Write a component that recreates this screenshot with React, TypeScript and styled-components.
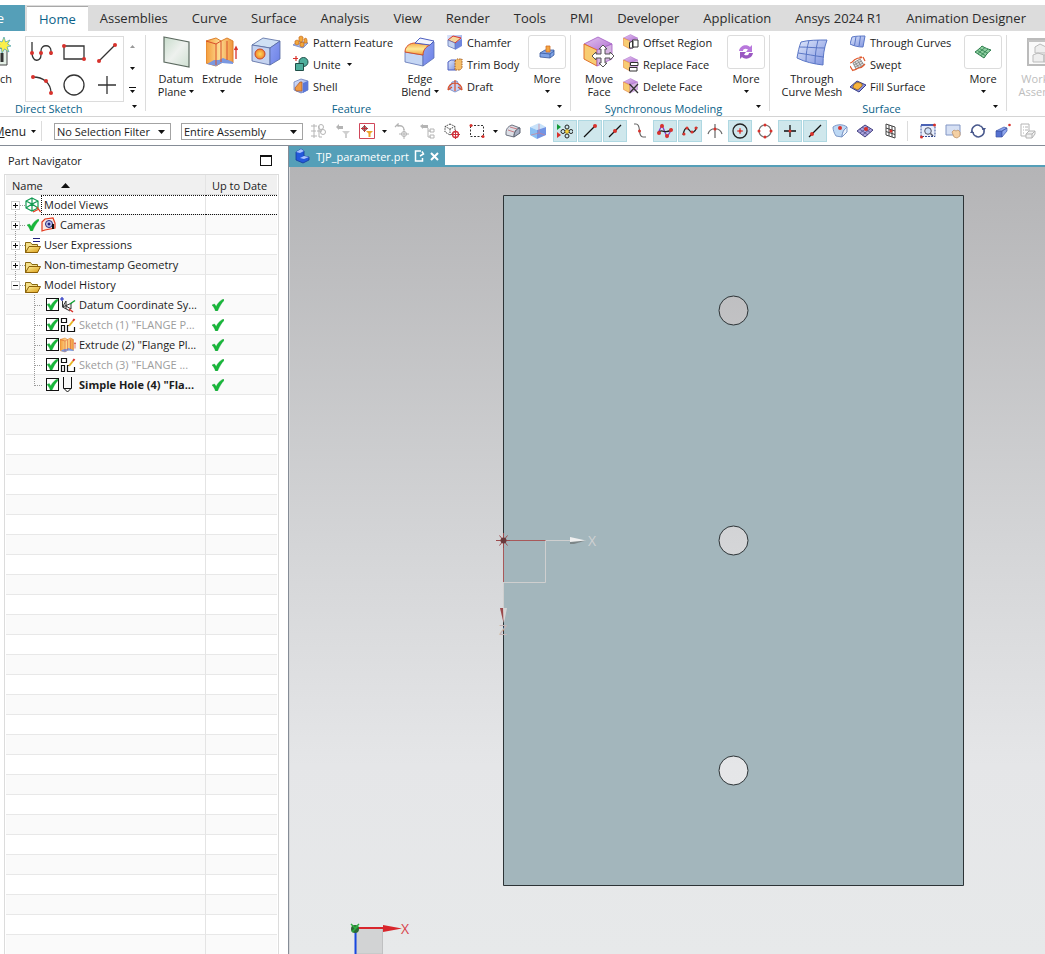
import React from "react";
import styled, { createGlobalStyle, css } from "styled-components";

const teal = "#559fb8";
const line = "#dcdcdc";

const GlobalStyle = createGlobalStyle`
  * { box-sizing: border-box; }
  html, body, #root { height: 100%; }
  body {
    margin: 0;
    background: #fff;
    color: #1c1c1c;
    font-family: "Open Sans", "Noto Sans", sans-serif;
    font-size: 12px;
    overflow: hidden;
  }
  button, select, input {
    font: inherit;
    color: inherit;
    margin: 0;
    padding: 0;
    border: 0;
    background: none;
  }
  svg { display: block; flex: none; }
`;

const Window = styled.div`
  display: flex;
  flex-direction: column;
  height: 100vh;
  overflow: hidden;
`;

/* ---------- tab strip ---------- */

const TabStrip = styled.nav`
  display: flex;
  flex: none;
  height: 26px;
  margin-top: 5px;
  background: #dcdcdc;
  font-size: 13px;
  line-height: 26px;
  white-space: nowrap;
`;

const FileTab = styled.button`
  display: flex;
  justify-content: flex-end;
  flex: none;
  width: 25px;
  margin-right: 2px;
  padding-right: 21px;
  background: ${teal};
  color: #fff;
`;

const Tab = styled.button<{ $active?: boolean }>`
  flex: none;
  padding: 0 12px;
  color: #2b2b2b;
  ${(p) =>
    p.$active &&
    css`
      background: #fff;
      color: #0b6289;
      border-top: 1px solid #a8a8a8;
      margin-top: 1px;
      line-height: 24px;
    `}
`;

/* ---------- ribbon ---------- */

const Ribbon = styled.div`
  display: flex;
  flex: none;
  height: 86px;
  padding-top: 1px;
  border-bottom: 1px solid #d4d4d4;
  font-size: 11px;
  overflow: hidden;
`;

const Group = styled.section<{ $w?: number }>`
  position: relative;
  display: flex;
  flex-direction: column;
  flex: none;
  width: ${(p) => (p.$w ? `${p.$w}px` : "auto")};
  padding: 0 1px 0 4px;
  &::after {
    content: "";
    position: absolute;
    right: -1px;
    top: 3px;
    height: 76px;
    width: 1px;
    background: ${line};
  }
  & + & { margin-left: 1px; }
`;

const GroupBody = styled.div`
  display: flex;
  height: 70px;
`;

const GroupTitle = styled.h2<{ $start?: boolean }>`
  margin: 0;
  padding: ${(p) => (p.$start ? "0 16px 0 11px" : "0 16px 0 0")};
  font-size: 11px;
  font-weight: 400;
  line-height: 14px;
  color: #0b6289;
  text-align: ${(p) => (p.$start ? "left" : "center")};
  white-space: nowrap;
`;

const Launcher = styled.button`
  position: absolute;
  right: 6px;
  bottom: 6px;
  width: 9px;
  height: 8px;
  display: flex;
  align-items: center;
  justify-content: center;
`;

const BigButton = styled.button<{ $w: number }>`
  display: flex;
  flex-direction: column;
  align-items: center;
  flex: none;
  width: ${(p) => p.$w}px;
  padding-top: 4px;
  line-height: 13px;
  white-space: nowrap;
  &:disabled { color: #bdbdbd; }
`;

const BigIcon = styled.span`
  height: 32px;
  margin-bottom: 4px;
`;

const MoreFrame = styled.span`
  display: flex;
  align-items: center;
  justify-content: center;
  width: 38px;
  height: 34px;
  margin: -1px 0 3px;
  border: 1px solid ${line};
  border-radius: 3px;
`;

const Line = styled.span`
  display: flex;
  align-items: center;
  justify-content: center;
  gap: 3px;
  height: 13px;
`;

const Commands = styled.div<{ $w: number; $indent?: boolean }>`
  display: flex;
  flex-direction: column;
  flex: none;
  width: ${(p) => p.$w}px;
  margin-top: -1px;
  padding-left: ${(p) => (p.$indent ? 3 : 0)}px;
`;

const Command = styled.button<{ $menu?: boolean }>`
  display: flex;
  align-items: center;
  gap: ${(p) => (p.$menu ? 6 : 4)}px;
  height: 22px;
  white-space: nowrap;
  > svg:first-child { margin-right: ${(p) => (p.$menu ? -2 : 0)}px; }
`;

const SketchClip = styled.div`
  display: flex;
  justify-content: flex-end;
  width: 15px;
  margin-left: -4px;
  flex: none;
  overflow: hidden;
`;

const Gallery = styled.div`
  display: grid;
  grid-template-columns: repeat(3, 1fr);
  grid-template-rows: repeat(2, 1fr);
  width: 99px;
  height: 66px;
  margin: 4px 0 0 10px;
  flex: none;
  border: 1px solid ${line};
`;

const GalleryCell = styled.button`
  display: flex;
  align-items: center;
  justify-content: center;
`;

const GalleryScroll = styled.div`
  display: flex;
  flex-direction: column;
  width: 17px;
  margin-top: 3px;
`;

const ScrollButton = styled.button`
  display: flex;
  align-items: center;
  justify-content: center;
  height: 22px;
`;

/* ---------- selection bar ---------- */

const SelectionBar = styled.div`
  display: flex;
  align-items: center;
  flex: none;
  height: 29px;
  border-bottom: 1px solid #858c96;
  overflow: hidden;
`;

const MenuButton = styled.button`
  display: flex;
  align-items: center;
  justify-content: flex-end;
  gap: 5px;
  width: 36px;
  flex: none;
  white-space: nowrap;
`;

const Divider = styled.span<{ $l: number; $r: number }>`
  flex: none;
  width: 1px;
  height: 20px;
  margin: 0 ${(p) => p.$r}px 0 ${(p) => p.$l}px;
  background: ${line};
`;

const Selects = styled.div`
  display: flex;
  gap: 10px;
  flex: none;
`;

const SelectBox = styled.label<{ $w: number }>`
  position: relative;
  flex: none;
  width: ${(p) => p.$w}px;
  height: 17px;
  border: 1px solid #a3a3a3;
  select {
    display: block;
    appearance: none;
    width: 100%;
    height: 15px;
    padding-left: 2px;
    font-size: 11px;
    line-height: 15px;
  }
  svg {
    position: absolute;
    right: 5px;
    top: 6px;
    pointer-events: none;
  }
`;

const Tools = styled.div`
  display: flex;
  align-items: center;
  gap: 1px;
  margin-left: 3px;
  flex: none;
`;

const Tool = styled.button<{ $on?: boolean; $w?: number }>`
  display: flex;
  align-items: center;
  justify-content: center;
  flex: none;
  width: ${(p) => p.$w ?? 24}px;
  height: 22px;
  ${(p) => p.$on && css`
    background: #cfe7ec;
    border: 1px solid #afd8e2;
  `}
`;

/* ---------- work area ---------- */

const Work = styled.main`
  display: flex;
  flex: 1;
  min-height: 0;
`;

const Navigator = styled.aside`
  display: flex;
  flex-direction: column;
  flex: none;
  width: 289px;
  padding-left: 4px;
  border-right: 1px solid #858c96;
  font-size: 11px;
  overflow: hidden;
`;

const NavigatorHead = styled.header`
  display: flex;
  align-items: center;
  justify-content: space-between;
  height: 28px;
  flex: none;
  padding: 1px 16px 0 4px;
  h1 { margin: 0; font-size: 11px; font-weight: 400; }
`;

const MaximizeButton = styled.button`
  width: 12px;
  height: 11px;
  border: 1px solid #111;
  border-top-width: 2px;
`;

const TreeFrame = styled.div`
  flex: 1;
  min-height: 0;
  width: 275px;
  overflow: hidden;
  border: 1px solid #dcdcdc;
  border-bottom: 0;
  padding: 0 1px;
`;

const Tree = styled.table`
  width: 100%;
  table-layout: fixed;
  border-collapse: separate;
  border-spacing: 0;
  th, td {
    height: 20px;
    padding: 0;
    border-bottom: 1px solid #e8e8e8;
    text-align: left;
    font-weight: 400;
    white-space: nowrap;
  }
  th {
    padding: 2px 0 0 6px;
    background: #f0f0f0;
    border-bottom-color: #dcdcdc;
  }
  th:first-child, td:first-child { width: 200px; border-right: 1px solid #e4e4e4; }
  tbody tr:nth-child(even) { background: #fafafa; }
`;

const HeadCell = styled.span`
  display: flex;
  align-items: center;
  gap: 18px;
`;

const Node = styled.div<{ $child?: boolean; $dim?: boolean; $bold?: boolean }>`
  display: flex;
  align-items: center;
  height: 19px;
  padding-left: ${(p) => (p.$child ? 28 : 5)}px;
  color: ${(p) => (p.$dim ? "#9d9d9d" : "inherit")};
  font-weight: ${(p) => (p.$bold ? 700 : 400)};
`;

const IconSlot = styled.span`
  display: flex;
  justify-content: center;
  width: 16px;
`;

const NodeLabel = styled.span<{ $focus?: boolean }>`
  flex: 1;
  min-width: 0;
  line-height: 19px;
  padding-left: 3px;
  ${(p) => p.$focus && css`
    height: 20px;
    margin: 0 -1px -1px 0;
    padding-left: 2px;
    line-height: 18px;
    border: 1px dotted #111;
    border-right: 0;
  `}
`;

const FocusCell = styled.div`
  height: 20px;
  margin-bottom: -1px;
  border: dotted #111;
  border-width: 1px 0;
`;

const NodeCheck = styled.input`
  display: block;
  appearance: none;
  flex: none;
  width: 13px;
  height: 13px;
  border: 1px solid #111;
  background: #fff;
`;

const CheckWrap = styled.label`
  position: relative;
  display: block;
  margin-right: 1px;
  height: 13px;
  svg { position: absolute; left: 1px; top: 1px; }
`;

const StatusCell = styled.div`
  padding-left: 6px;
`;

/* ---------- graphics window ---------- */

const Graphics = styled.section`
  display: flex;
  flex-direction: column;
  flex: 1;
  min-width: 0;
`;

const DocTabs = styled.div`
  display: flex;
  flex: none;
  height: 21px;
  border-bottom: 2px solid ${teal};
`;

const DocTab = styled.div`
  display: flex;
  align-items: center;
  gap: 5px;
  padding: 0 6px;
  height: 20px;
  background: ${teal};
  color: #fff;
  font-size: 11px;
`;

const CloseButton = styled.button`
  display: flex;
`;

const Canvas = styled.div`
  position: relative;
  flex: 1;
  min-height: 0;
  overflow: hidden;
  border-left: 1px solid #d6d8da;
  background: linear-gradient(#b4b4b6 0%, #d4d5d7 48%, #e5e6e8 76%, #e7e9ea 100%);
`;

const Scene = styled.svg`
  width: 100%;
  height: 100%;
`;

const Triad = styled.svg`
  position: absolute;
  left: 56px;
  bottom: 0;
`;

/* ---------- glyphs ---------- */

const Caret = ({ size = 5 }: { size?: number }) => (
  <svg width={size} height={Math.ceil(size / 2)} viewBox="0 0 10 6" preserveAspectRatio="none">
    <path d="M0 0H10L5 6Z" fill="#111" />
  </svg>
);

const Dot = ({ x, y, r = 2 }: { x: number; y: number; r?: number }) => (
  <circle cx={x} cy={y} r={r} fill="#d8322c" />
);

const Svg = ({ s = 16, v = s, children }: { s?: number; v?: number; children: React.ReactNode }) => (
  <svg width={s} height={s} viewBox={`0 0 ${v} ${v}`} fill="none">
    {children}
  </svg>
);

const HiddenSvg = styled.svg`
  position: absolute;
`;

const Gradients = () => (
  <HiddenSvg width="0" height="0">
    <defs>
      <linearGradient id="blue" x1="0" y1="0" x2="1" y2="1">
        <stop offset="0" stopColor="#dfe8fb" />
        <stop offset="1" stopColor="#7f93e0" />
      </linearGradient>
      <linearGradient id="side" x1="0" y1="0" x2="1" y2="1">
        <stop offset="0" stopColor="#8fa2f2" />
        <stop offset="1" stopColor="#6c80e6" />
      </linearGradient>
      <linearGradient id="orange" x1="0" y1="0" x2="1" y2="0">
        <stop offset="0" stopColor="#f49b3a" />
        <stop offset=".5" stopColor="#fcdc92" />
        <stop offset="1" stopColor="#f0953a" />
      </linearGradient>
      <linearGradient id="plane" x1="0" y1="0" x2="1" y2="1">
        <stop offset="0" stopColor="#c7dccb" />
        <stop offset=".5" stopColor="#eef1ee" />
        <stop offset="1" stopColor="#cfe0d2" />
      </linearGradient>
      <linearGradient id="yellow" x1="0" y1="0" x2="1" y2="1">
        <stop offset="0" stopColor="#fff3a0" />
        <stop offset="1" stopColor="#d99a12" />
      </linearGradient>
      <linearGradient id="blend" x1="0" y1="0" x2="0" y2="1">
        <stop offset="0" stopColor="#f6a94a" />
        <stop offset=".5" stopColor="#fdeb9a" />
        <stop offset="1" stopColor="#f0a03e" />
      </linearGradient>
      <radialGradient id="hole">
        <stop offset="0" stopColor="#ffd95a" />
        <stop offset="1" stopColor="#f0862c" />
      </radialGradient>
      <linearGradient id="violet" x1="0" y1="0" x2="1" y2="1">
        <stop offset="0" stopColor="#e3c4f0" />
        <stop offset="1" stopColor="#b273d2" />
      </linearGradient>
    </defs>
  </HiddenSvg>
);

const SketchIcon = () => (
  <Svg s={32}>
    <path d="M4 12H28V29H4Z" fill="#e4efe6" stroke="#444" />
    <path d="M23 17V26" stroke="#333" strokeWidth="3" />
    <path d="M25 1L26.5 6L31 4L28.5 8L32 10L28 11L30 16L25.5 13L23 17L22.5 12L17 12L21 9L18 4L23 6Z" fill="#fbf04a" stroke="#3f9fb4" strokeWidth=".7" />
  </Svg>
);

const DatumPlaneIcon = () => (
  <Svg s={32}>
    <path d="M4 1L29 6V31L4 26Z" fill="url(#plane)" stroke="#5c6a60" strokeWidth="1.2" />
  </Svg>
);

const ExtrudeIcon = ({ s = 32 }: { s?: number }) => (
  <Svg s={s} v={32}>
    <path d="M0 5L10 2L15 5L21 2L27 5V27L21 24L15 27L10 30L0 27Z" fill="url(#orange)" stroke="#dd7f2a" />
    <path d="M1 28L8 24H13L17 22L27 26V28L16 27L10 30Z" fill="#7a98e0" />
    <path d="M10 8V29M15 5V26M21 5V24M10 8L15 5M0 5L10 8" stroke="#d8502c" />
    <path d="M30 23V12M28.5 14L30 11L31.5 14" stroke="#d8322c" strokeWidth="1.3" />
  </Svg>
);

const HoleIcon = () => (
  <Svg s={32}>
    <g stroke="#54689f" strokeWidth=".8">
      <path d="M2 9L13 2L30 5L20 12Z" fill="#cfe0f4" />
      <path d="M2 9L20 12V29L2 25Z" fill="#c5d3f0" />
      <path d="M20 12L30 5V23L20 29Z" fill="url(#side)" />
    </g>
    <circle cx="10" cy="18" r="5" fill="url(#hole)" stroke="#c9442a" />
  </Svg>
);

const EdgeBlendIcon = () => (
  <Svg s={32}>
    <path d="M1 16L19 19V30L1 26Z" fill="#c5d6f4" stroke="#5a70b4" strokeWidth=".8" />
    <path d="M19 19C19 13 23 10 30 6V22L19 30Z" fill="url(#side)" stroke="#5a70b4" strokeWidth=".8" />
    <path d="M1 16C1 10 6 7 11 7L26 9C21 11 19 15 19 19Z" fill="url(#blend)" stroke="#d8502c" />
    <path d="M11 7L16 2L30 5L26 9Z" fill="#f1f4ff" stroke="#4c5ec0" />
  </Svg>
);

const PatternIcon = () => (
  <Svg>
    <path d="M0 11L6 7L15 9L10 14Z" fill="#a9bff0" stroke="#5c76bb" strokeWidth=".7" />
    <path d="M2 10V7L4 6L6 7V10L4 11ZM6 6V3L8 2L10 3V6L8 9ZM7 12V9L9 8L11 9V12L9 13ZM11 9V5L13 4L14 6V9Z" fill="#f2a83c" stroke="#c66a1e" strokeWidth=".7" />
  </Svg>
);

const UniteIcon = () => (
  <Svg>
    <path d="M3 0V5M0 2.5H5" stroke="#d8322c" strokeWidth="1.2" />
    <circle cx="10.500" cy="6" r="4.500" fill="#4fae9c" stroke="#1f4f48" />
    <path d="M2.500 7.500H10.500V14.500H2.500Z" fill="#4fae9c" stroke="#1f4f48" />
  </Svg>
);

const ShellIcon = () => (
  <Svg>
    <path d="M1 4L8 1L15 3V12L8 15L1 12Z" fill="url(#blue)" stroke="#5a70b4" strokeWidth=".7" />
    <path d="M10 5L15 3V12L10 15Z" fill="#5c78d8" />
    <path d="M2 10L7 4H9V13L3 13Z" fill="#ef9a44" stroke="#a8542a" strokeWidth=".7" />
  </Svg>
);

const ChamferIcon = () => (
  <Svg>
    <path d="M0 1H15V11L8 15L1 12Z" fill="url(#blue)" />
    <path d="M8 9L15 5V12L8 16Z" fill="#6f86de" />
    <path d="M1 6L6 2L14 4L8 9Z" fill="#f6d79b" stroke="#d8322c" />
    <path d="M1 6L8 9V15L1 12Z" fill="#c5d3f0" stroke="#5a70b4" strokeWidth=".7" />
  </Svg>
);

const TrimBodyIcon = () => (
  <Svg>
    <path d="M1 6L4 4H9V14H1Z" fill="url(#blue)" stroke="#4c5ec0" />
    <path d="M8 5L10 3H15V12L13 14H8Z" fill="#f4bd68" stroke="#a05a20" strokeDasharray="1.5 1" />
  </Svg>
);

const DraftIcon = () => (
  <Svg>
    <path d="M5 4L10 3L14 11L8 14L2 11Z" fill="#c7d3f6" stroke="#5a70b4" strokeWidth=".7" />
    <path d="M8 2V13M8 5C4 5 1 8 1 12M8 5C12 5 15 8 15 12M1 12L5 9M15 12L11 9" stroke="#d8502c" strokeWidth="1.2" />
  </Svg>
);

const FeatureMoreIcon = () => (
  <Svg>
    <path d="M1 9L6 6H15V11L11 14L1 13Z" fill="#7fa3e6" stroke="#37589c" strokeWidth=".8" />
    <path d="M1 9L11 10L15 7M11 10V14" stroke="#37589c" strokeWidth=".8" />
    <path d="M7 8V2H11V8Z" fill="#f4a640" stroke="#d2702a" strokeWidth=".8" />
  </Svg>
);

const FaceCube = ({ children }: { children?: React.ReactNode }) => (
  <>
    <path d="M1 8L15 1L29 8L14 14Z" fill="url(#violet)" stroke="#a25cc4" strokeWidth=".8" />
    <path d="M1 8L14 14V30L1 23Z" fill="#f8cc72" stroke="#e0702c" />
    <path d="M14 14L29 8V23L14 30Z" fill="#d6b4e2" stroke="#a25cc4" strokeWidth=".8" />
    {children}
  </>
);

const MoveFaceIcon = () => (
  <Svg s={32}>
    <FaceCube>
      <path d="M20 9L24 13H22V18H27V16L31 20L27 24V22H22V27H24L20 31L16 27H18V22H13V24L9 20L13 16V18H18V13H16Z" fill="#fff" stroke="#555" />
    </FaceCube>
  </Svg>
);

const OffsetRegionIcon = () => (
  <Svg s={16} v={32}>
    <FaceCube>
      <path d="M13 17L20 14V28H13ZM19 12H30V26H19Z" fill="#fff" stroke="#333" strokeWidth="2" />
    </FaceCube>
  </Svg>
);

const ReplaceFaceIcon = () => (
  <Svg s={16} v={32}>
    <FaceCube>
      <path d="M15 13H30V19H15ZM13 23H28V30H13Z" fill="#fff" stroke="#333" strokeWidth="2" />
    </FaceCube>
  </Svg>
);

const DeleteFaceIcon = () => (
  <Svg s={16} v={32}>
    <FaceCube>
      <path d="M13 12L30 30M30 12L13 30" stroke="#333" strokeWidth="2.5" />
    </FaceCube>
  </Svg>
);

const SyncMoreIcon = () => (
  <Svg>
    <path d="M1 7C2 1 9 0 12 3L14 1V8H8L10 5.5C8 4 5 4.500 5 7Z" fill="#b877dc" />
    <path d="M15 9C14 15 7 16 4 13L2 15V8H8L6 10.5C8 12 11 11.500 11 9Z" fill="#9a58c2" />
  </Svg>
);

const CurveMeshIcon = () => (
  <Svg s={32}>
    <path d="M5 6C12 4 22 4 31 4C28 12 27 20 27 29C18 28 9 26 1 22C2 16 3 11 5 6Z" fill="url(#blue)" stroke="#5b77c6" />
    <path d="M13 4.500C11 11 10 18 10 25.500M22 4C20 12 19 20 19 28M3.500 11C12 11 20 12 29 12M2 17C10 18 19 20 27.500 21" stroke="#5b77c6" />
  </Svg>
);

const ThroughCurvesIcon = () => (
  <Svg>
    <path d="M2 3C6 2 11 2 15 2L13 13C8 13 4 12 0 10Z" fill="url(#blue)" stroke="#5b77c6" />
    <path d="M6 2.5L4.5 11.5M10.5 2L9 12.5" stroke="#5b77c6" />
  </Svg>
);

const SweptIcon = () => (
  <Svg>
    <path d="M3 7L10 3L14 9L6 13Z" fill="#ddd" stroke="#777" strokeWidth=".8" />
    <path d="M5 6L9 12M7.5 4.5L11.5 10.5M4 9L11.5 5M5 11L13 7" stroke="#777" strokeWidth=".7" />
    <path d="M0 7C3 7 3 4 6 3C9 1 10 3 12 1M12 1H9.5M2 14C5 15 7 12 9 12C12 12 13 10 15 8M0 10L3 15M13 1L15 5" stroke="#e0582c" strokeWidth="1.2" />
  </Svg>
);

const FillSurfaceIcon = () => (
  <Svg>
    <path d="M0 9L7 3L16 7L9 14Z" fill="#8d92dc" stroke="#39408c" />
    <path d="M3 10C3 5 8 3 12 6C13 9 10 9 9 11C7 13 5 10 3 10Z" fill="#f7b43c" stroke="#7a5218" strokeWidth=".7" />
  </Svg>
);

const SurfaceMoreIcon = () => (
  <Svg>
    <path d="M0 8C3 6 5 4 7 2C10 4 13 5 16 6C13 8 11 11 9 14C6 12 3 10 0 8Z" fill="#8fcfa0" stroke="#2c7c4c" />
    <path d="M2.5 6.5L11 12M4.5 4.5L13 9.5M3 9.5L10 3.5M6 11.5L13 5" stroke="#2c7c4c" strokeWidth=".8" />
  </Svg>
);

const WorkOnIcon = () => (
  <Svg s={32}>
    <path d="M1 3H31V29H1Z" fill="#fafafa" stroke="#bbb" strokeWidth="2" />
    <path d="M1 5H31" stroke="#c4c4c4" strokeWidth="2" />
    <path d="M6 19L11 17L17 19V26H6ZM17 19L22 17L28 19V26H17ZM8 11L13 8L19 11V17H8Z" fill="#eee" stroke="#bbb" />
  </Svg>
);

const FolderIcon = ({ marked }: { marked?: boolean }) => (
  <Svg>
    <path d="M.5 5.5H5.5L7 7.5H12.5V15.5H.5Z" fill="#f5e08a" stroke="#8a6a10" />
    <path d="M.5 15.5L4 9.5H15.5L12.5 15.5Z" fill="url(#yellow)" stroke="#8a5f08" />
    {marked && <path d="M8 1.5H15M8 4.5H15" stroke="#20207c" />}
  </Svg>
);

const GreenCheck = ({ s = 12 }: { s?: number }) => (
  <Svg s={s} v={12}>
    <path d="M0 6L2.5 5L4.2 7.5C5.5 4.5 8 1.5 11.5 0L12 1.5C9.5 4 7.5 7.5 5.5 12H3.500C3 10 1.500 7.500 0 6Z" fill="#17b83a" stroke="#0c9a2a" strokeWidth=".4" />
  </Svg>
);

const ModelViewsIcon = () => (
  <Svg>
    <path d="M7 1L13 4V11L7 14L1 11V4ZM1 4L7 7L13 4M7 1V14M1 11L7 7L13 11" stroke="#129a52" strokeWidth="1.2" />
    <path d="M8 15L14 12M12 10L15.5 15" stroke="#e63a1e" strokeWidth="1.3" />
  </Svg>
);

const CameraIcon = () => (
  <Svg>
    <path d="M1 5L4 2L12 1L14 6V11L4 13L1 14Z" fill="#fde9e0" stroke="#e2391e" strokeWidth="1.2" />
    <circle cx="8" cy="7" r="3.5" fill="#c4c8f0" stroke="#24267c" />
    <circle cx="8" cy="7" r="1.5" fill="#24267c" />
    <path d="M12 7V12" stroke="#111" strokeWidth="2" />
  </Svg>
);

const CsysIcon = () => (
  <Svg>
    <path d="M2 0V4M0 2H4" stroke="#2430c0" strokeWidth="1.2" />
    <path d="M2.500 4V10L10 14M2.500 10L12 6M6 4V12M6 4L2.500 10M6 9L11 12V7" stroke="#333" />
    <path d="M10 7L15 3.5" stroke="#12a234" strokeWidth="1.5" />
    <path d="M9 12L13 15" stroke="#d8322c" strokeWidth="1.5" />
  </Svg>
);

const SketchNodeIcon = () => (
  <Svg>
    <path d="M1.5 1.5H6.5V5.5H1.5ZM1.5 8.5H4.5V14.5H1.5ZM9 8.5H7.5V14.5H14.500V10" stroke="#111" strokeWidth="1.2" />
    <path d="M9 9L13 4" stroke="#e8b422" strokeWidth="2" />
    <path d="M13 4L14.5 2" stroke="#d8322c" strokeWidth="2" />
  </Svg>
);

const HoleNodeIcon = () => (
  <Svg>
    <path d="M3.5 0V11L7.5 15L11.5 11V0M3.5 11.5H11.5" stroke="#111" />
  </Svg>
);

const Twisty = ({ open, first, last }: { open?: boolean; first?: boolean; last?: boolean }) => (
  <svg width="14" height="20" viewBox="0 0 14 20" fill="none">
    <path d={`M4.5 ${first ? 10 : 0}V${last ? 10 : 20}M9 10.5H14`} stroke="#999" strokeDasharray="1 1" />
    <rect x=".5" y="6.5" width="8" height="8" fill="#fff" stroke="#d0d0d0" />
    <path d={open ? "M2 10.5H7" : "M2 10.5H7M4.5 8V13"} stroke="#111" />
  </svg>
);

const Branch = ({ last }: { last?: boolean }) => (
  <svg width="12" height="20" viewBox="0 0 12 20" fill="none">
    <path d={`M.5 0V${last ? 11 : 20}M1 10.5H9`} stroke="#999" strokeDasharray="1 1" />
  </svg>
);

/* selection-bar icons */
const gray = "#b4b4b4";
const HierarchyIcon = () => (
  <Svg><path d="M1 3H7M1 8H6M1 13H7M4 1V15M7 8H12M9 3V14H12" stroke={gray} /><circle cx="11" cy="4" r="2.5" stroke={gray} /><circle cx="13" cy="9" r="2.5" stroke={gray} /></Svg>
);
const UndoFilterIcon = () => (
  <Svg><path d="M1 4L4 1V3H8V6H4V7Z" fill={gray} /><path d="M7 8H15L12 11V15H10V11Z" fill="#cfcfcf" /></Svg>
);
const FilterIcon = () => (
  <Svg>
    <path d="M.5 .5H15.5V15.5H.5Z" fill="#fff" stroke="#d0475a" />
    <circle cx="5.5" cy="5.5" r="2" stroke="#5a2020" /><path d="M5.5 2V9M2 5.5H9" stroke="#c0303a" />
    <path d="M7 8H14L11.5 10.5V14H9.5V10.5Z" fill="#eda42c" />
  </Svg>
);
const UndoTargetIcon = () => (
  <Svg><path d="M1 4L4 1V3C8 2 10 4 10 7" stroke={gray} strokeWidth="1.3" /><circle cx="10" cy="11" r="2.5" stroke={gray} /><path d="M10 6V16M5 11H15" stroke={gray} /></Svg>
);
const TreeUpIcon = () => (
  <Svg><path d="M1 3L4 1V6ZM4 2H9V5H4Z" fill={gray} /><path d="M9 5V14H12M9 8H12M11 6H15V9H11ZM11 12H15V15H11Z" stroke={gray} /></Svg>
);
const CubeTargetIcon = () => (
  <Svg>
    <path d="M6 1L11 3.5V9L6 12L1 9V3.5ZM1 3.5L6 6L11 3.5M6 6V12" stroke="#444" strokeDasharray="1.5 1" />
    <circle cx="11.5" cy="11.5" r="3" stroke="#d0303a" strokeWidth="1.3" /><path d="M11.5 7V16M7 11.5H16" stroke="#d0303a" />
  </Svg>
);
const MarqueeIcon = () => (
  <Svg><path d="M1.5 2.500H14.500V13.500H1.500Z" stroke="#333" strokeDasharray="2 1.5" /><Dot x={2} y={2.5} r={1.5} /><Dot x={14} y={13.5} r={1.5} /></Svg>
);
const BodyIcon = () => (
  <Svg>
    <path d="M1 10C1 5 4 3 7 2L15 5C11 6 9 9 9 14L1 12Z" fill="#dcdfe6" stroke="#6c7280" />
    <path d="M15 5V10L9 14C9 9 11 6 15 5Z" fill="#a8b0c4" stroke="#5c6270" /><path d="M5 4L12 6M3 7L9 9" stroke="#c0606a" strokeWidth=".8" />
  </Svg>
);
const SolidIcon = () => (
  <Svg>
    <path d="M0 4L9 0L16 4L7 7Z" fill="#c8e2fa" /><path d="M0 4L7 7V16L0 12Z" fill="#8cc0f2" /><path d="M7 7L16 4V12L7 16Z" fill="#7294e4" />
    <path d="M9 1V10M1 12L9 10L15 12" stroke="#d08090" strokeWidth=".7" />
  </Svg>
);
const SnapIcon = () => (
  <Svg>
    <path d="M0 1L4 4L0 7Z" fill="#129a34" /><path d="M0 9L4 12L0 15Z" fill="#d8322c" />
    <circle cx="10" cy="4" r="2" stroke="#222" /><circle cx="10" cy="13" r="2" stroke="#222" /><circle cx="6" cy="8.5" r="2" stroke="#222" /><circle cx="14" cy="8.5" r="2" stroke="#222" />
    <circle cx="10" cy="8.5" r="2" fill="#f4d23a" stroke="#8a6a10" strokeWidth=".6" />
  </Svg>
);
const EndPointIcon = () => (<Svg><path d="M2 14L13 3" stroke="#111" strokeWidth="1.3" /><Dot x={13} y={3} /></Svg>);
const MidPointIcon = () => (<Svg><path d="M2 14L14 2" stroke="#111" strokeWidth="1.3" /><Dot x={8} y={8} /></Svg>);
const ControlIcon = () => (<Svg><path d="M2 1H4C10 1 5 14 11 14H14" stroke="#666" strokeWidth="1.2" /><Dot x={7.5} y={8} r={1.5} /></Svg>);
const PoleIcon = () => (
  <Svg><path d="M1 10L5 2L10 14L15 6" stroke="#8a3ac8" strokeWidth="1.3" /><path d="M1 10C5 4 8 13 15 6" stroke="#222" strokeWidth="1.3" /><Dot x={2} y={10} /><Dot x={5} y={3} /><Dot x={10} y={13} /><Dot x={14} y={7} /></Svg>
);
const SplineIcon = () => (
  <Svg><path d="M1 12C3 2 6 5 8 8C10 11 13 9 15 4" stroke="#222" strokeWidth="1.3" /><Dot x={2} y={11} r={1.5} /><Dot x={5} y={5} r={1.5} /><Dot x={10} y={9} r={1.5} /><Dot x={14} y={5} r={1.5} /></Svg>
);
const IntersectIcon = () => (<Svg><path d="M8 1V15M1 11C3 4 13 4 15 11" stroke="#666" strokeWidth="1.2" /><Dot x={8} y={6} r={1.5} /></Svg>);
const ArcCenterIcon = () => (<Svg><circle cx="8" cy="8" r="7" stroke="#222" strokeWidth="1.3" /><path d="M8 5V11M5 8H11" stroke="#d8322c" /><Dot x={8} y={8} r={1.5} /></Svg>);
const QuadrantIcon = () => (
  <Svg><circle cx="8" cy="8" r="6" stroke="#777" strokeWidth="1.2" /><Dot x={8} y={2} r={1.5} /><Dot x={8} y={14} r={1.5} /><Dot x={2} y={8} r={1.5} /><Dot x={14} y={8} r={1.5} /></Svg>
);
const PointIcon = () => (<Svg><path d="M8 2V14M2 8H14" stroke="#111" strokeWidth="1.3" /><Dot x={8} y={8} r={1.5} /></Svg>);
const OnCurveIcon = () => (<Svg><path d="M2 14L14 2" stroke="#111" strokeWidth="1.3" /><Dot x={5} y={11} /></Svg>);
const OnFaceIcon = () => (
  <Svg><path d="M1 4C5 1 11 1 15 4L12 7C11 9 10 11 10 14L4 13C2 10 1 7 1 4Z" fill="#bdd8f4" stroke="#7c98c8" /><path d="M15 4L12 7C11 9 10 11 10 14L15 9Z" fill="#eef4fc" stroke="#7c98c8" /><Dot x={8} y={5} /></Svg>
);
const GridFaceIcon = () => (
  <Svg><path d="M0 8L8 2L16 7L8 14Z" fill="#aaa4dc" stroke="#444080" /><path d="M2.5 6L11 12M5 4L13.5 9.5M3 10L11 4M5.5 12L13.5 5.5" stroke="#444080" strokeWidth=".7" /><Dot x={9} y={6} /></Svg>
);
const GridIcon = () => (
  <Svg><path d="M4 1L13 4V15L4 12ZM7 2V13M10 3V14M4 5L13 8M4 8.5L13 11.5" stroke="#444" /><Dot x={9} y={8} r={1.5} /></Svg>
);
const FitIcon = () => (
  <Svg><path d="M1 2.5H15V13.5H1Z" fill="#e8eefb" stroke="#334a94" strokeDasharray="2 1" /><path d="M1 2H15" stroke="#4a62b4" strokeWidth="2" /><circle cx="8" cy="8" r="3.3" fill="#cfe0f8" stroke="#556" /><path d="M10.5 10.5L13 13" stroke="#556" strokeWidth="1.5" /><Dot x={14.5} y={2} r={1.5} /><Dot x={1.5} y={14} r={1.5} /></Svg>
);
const PanIcon = () => (
  <Svg><path d="M1 2H15V12H1Z" fill="#d6e0f4" stroke="#8296c4" /><path d="M7 9L9 7L11 8L13 7L15 9V13L12 15L9 14Z" fill="#f4d0a4" stroke="#b98c60" strokeWidth=".7" /></Svg>
);
const RotateIcon = () => (
  <Svg><path d="M2 9C1 4 6 1 10 2.5M14 7C15 12 10 15 6 13.5M13 7C13 4 11 3 9 2.5M3 9C3 12 5 13 7 13.5" stroke="#48588c" strokeWidth="1.5" /><path d="M12 5H16L14 8ZM0 10H4L2 7Z" fill="#48588c" /></Svg>
);
const PerspectiveIcon = () => (
  <Svg><path d="M1 8H7V14H1Z" fill="#5470d0" stroke="#4058a8" strokeWidth=".7" /><path d="M1 8L9 4L12 5L7 8ZM7 8L12 5V8L7 14Z" fill="#8ea6ee" stroke="#4058a8" strokeWidth=".7" /><Dot x={14.5} y={2} r={1.3} /></Svg>
);
const ListCubeIcon = () => (
  <Svg><path d="M1 1H9V13H1ZM3 4H4M5 4H8M3 7H4M5 7H8M3 10H4" stroke={gray} /><path d="M6 11L9 8H15V11L12 15H6ZM6 11H12V15M12 11L15 8" fill="#f2f2f2" stroke={gray} /></Svg>
);
const PartIcon = () => (
  <Svg>
    <path d="M1 4L6 1L9 3V8L14 9V12L8 15L1 12Z" fill="#2459dc" stroke="#123a9c" strokeWidth=".8" />
    <path d="M1 4L6 1L9 3L5 5ZM5 10L9 8L14 9L9 11Z" fill="#a9c4ff" />
  </Svg>
);

/* ---------- composed pieces ---------- */

type CmdProps = { icon: React.ReactNode; label: string; menu?: boolean };
const Cmd = ({ icon, label, menu }: CmdProps) => (
  <Command $menu={menu}>
    {icon}
    <span>{label}</span>
    {menu && <Caret />}
  </Command>
);

type BigProps = { w: number; icon: React.ReactNode; top: string; bottom?: string; menu?: boolean; disabled?: boolean };
const Big = ({ w, icon, top, bottom, menu, disabled }: BigProps) => (
  <BigButton $w={w} disabled={disabled}>
    <BigIcon>{icon}</BigIcon>
    <Line>{top}</Line>
    <Line>
      {bottom}
      {menu && <Caret />}
    </Line>
  </BigButton>
);

const More = ({ icon }: { icon: React.ReactNode }) => (
  <BigButton $w={44}>
    <MoreFrame>{icon}</MoreFrame>
    <Line>More</Line>
    <Line>
      <Caret />
    </Line>
  </BigButton>
);

const DialogLauncher = () => (
  <Launcher aria-label="Group options">
    <Caret />
  </Launcher>
);

const tabs = [
  "Home", "Assemblies", "Curve", "Surface", "Analysis", "View", "Render", "Tools",
  "PMI", "Developer", "Application", "Ansys 2024 R1", "Animation Designer",
];

const galleryIcons = [
  <Svg s={24} key="profile"><path d="M2 1V11C2 22 11 21 11 14V10C11 3 21 3 21 10V14" stroke="#333" strokeWidth="1.3" /><Dot x={2} y={12} /><Dot x={11} y={12} /><Dot x={21} y={12} /></Svg>,
  <Svg s={24} key="rect"><path d="M2 5H22V18H2Z" stroke="#333" strokeWidth="1.3" /><Dot x={2} y={5} /><Dot x={22} y={18} /></Svg>,
  <Svg s={24} key="line"><path d="M4 20L20 4" stroke="#333" strokeWidth="1.3" /><Dot x={4} y={20} /><Dot x={20} y={4} /></Svg>,
  <Svg s={24} key="arc"><path d="M3 4C13 4 21 10 21 20" stroke="#333" strokeWidth="1.3" /><Dot x={3} y={4} /><Dot x={16} y={8} /><Dot x={21} y={20} /></Svg>,
  <Svg s={24} key="circle"><circle cx="12" cy="12" r="10" stroke="#333" strokeWidth="1.3" /></Svg>,
  <Svg s={24} key="point"><path d="M12 3V21M3 12H21" stroke="#333" strokeWidth="1.3" /></Svg>,
];

const snapTools: [React.ReactNode, string, boolean][] = [
  [<SnapIcon />, "Enable snap point", true],
  [<EndPointIcon />, "End point", true],
  [<MidPointIcon />, "Mid point", true],
  [<ControlIcon />, "Control point", false],
  [<PoleIcon />, "Pole", true],
  [<SplineIcon />, "Defining point", true],
  [<IntersectIcon />, "Intersection", false],
  [<ArcCenterIcon />, "Arc center", true],
  [<QuadrantIcon />, "Quadrant point", false],
  [<PointIcon />, "Existing point", true],
  [<OnCurveIcon />, "Point on curve", true],
  [<OnFaceIcon />, "Point on face", false],
  [<GridFaceIcon />, "Tangent point", false],
  [<GridIcon />, "Grid point", false],
];

const viewTools: [React.ReactNode, string][] = [
  [<FitIcon />, "Fit"],
  [<PanIcon />, "Pan"],
  [<RotateIcon />, "Rotate"],
  [<PerspectiveIcon />, "Perspective"],
  [<ListCubeIcon />, "View list"],
];

const history = [
  { label: "Datum Coordinate Sy...", icon: <CsysIcon /> },
  { label: 'Sketch (1) "FLANGE P...', icon: <SketchNodeIcon />, dim: true },
  { label: 'Extrude (2) "Flange Pl...', icon: <ExtrudeIcon s={16} /> },
  { label: 'Sketch (3) "FLANGE ...', icon: <SketchNodeIcon />, dim: true },
  { label: 'Simple Hole (4) "Fla...', icon: <HoleNodeIcon />, bold: true },
];

const emptyRows = Array.from({ length: 28 }, (_, i) => i);

const hole = (cx: number, cy: number) => `M${cx - 14.5} ${cy}a14.5 14.5 0 1 0 29 0a14.5 14.5 0 1 0 -29 0Z`;

export default function App() {
  return (
    <Window>
      <GlobalStyle />
      <Gradients />

      <TabStrip>
        <FileTab>File</FileTab>
        {tabs.map((t) => (
          <Tab key={t} $active={t === "Home"}>{t}</Tab>
        ))}
      </TabStrip>

      <Ribbon>
        <Group $w={145}>
          <GroupBody>
            <SketchClip>
              <Big w={40} icon={<SketchIcon />} top="Sketch" />
            </SketchClip>
            <Gallery>
              {galleryIcons.map((icon, i) => (
                <GalleryCell key={i}>{icon}</GalleryCell>
              ))}
            </Gallery>
            <GalleryScroll>
              <ScrollButton aria-label="Scroll up">
                <svg width="5" height="3" viewBox="0 0 10 6"><path d="M0 6H10L5 0Z" fill="#999" /></svg>
              </ScrollButton>
              <ScrollButton aria-label="Scroll down"><Caret /></ScrollButton>
              <ScrollButton aria-label="Expand gallery">
                <svg width="7" height="6" viewBox="0 0 7 6"><path d="M0 0H7V1H0ZM1 3H6L3.5 6Z" fill="#111" /></svg>
              </ScrollButton>
            </GalleryScroll>
          </GroupBody>
          <GroupTitle $start>Direct Sketch</GroupTitle>
          <DialogLauncher />
        </Group>

        <Group>
          <GroupBody>
            <Big w={52} icon={<DatumPlaneIcon />} top="Datum" bottom="Plane" menu />
            <Big w={40} icon={<ExtrudeIcon />} top="Extrude" menu />
            <Big w={48} icon={<HoleIcon />} top="Hole" />
            <Commands $w={106} $indent>
              <Cmd icon={<PatternIcon />} label="Pattern Feature" />
              <Cmd icon={<UniteIcon />} label="Unite" menu />
              <Cmd icon={<ShellIcon />} label="Shell" />
            </Commands>
            <Big w={48} icon={<EdgeBlendIcon />} top="Edge" bottom="Blend" menu />
            <Commands $w={81} $indent>
              <Cmd icon={<ChamferIcon />} label="Chamfer" />
              <Cmd icon={<TrimBodyIcon />} label="Trim Body" />
              <Cmd icon={<DraftIcon />} label="Draft" />
            </Commands>
            <More icon={<FeatureMoreIcon />} />
          </GroupBody>
          <GroupTitle>Feature</GroupTitle>
          <DialogLauncher />
        </Group>

        <Group>
          <GroupBody>
            <Big w={48} icon={<MoveFaceIcon />} top="Move" bottom="Face" />
            <Commands $w={101}>
              <Cmd icon={<OffsetRegionIcon />} label="Offset Region" />
              <Cmd icon={<ReplaceFaceIcon />} label="Replace Face" />
              <Cmd icon={<DeleteFaceIcon />} label="Delete Face" />
            </Commands>
            <More icon={<SyncMoreIcon />} />
          </GroupBody>
          <GroupTitle>Synchronous Modeling</GroupTitle>
          <DialogLauncher />
        </Group>

        <Group>
          <GroupBody>
            <Big w={76} icon={<CurveMeshIcon />} top="Through" bottom="Curve Mesh" />
            <Commands $w={111}>
              <Cmd icon={<ThroughCurvesIcon />} label="Through Curves" />
              <Cmd icon={<SweptIcon />} label="Swept" />
              <Cmd icon={<FillSurfaceIcon />} label="Fill Surface" />
            </Commands>
            <More icon={<SurfaceMoreIcon />} />
          </GroupBody>
          <GroupTitle>Surface</GroupTitle>
          <DialogLauncher />
        </Group>

        <Group>
          <GroupBody>
            <Big w={64} icon={<WorkOnIcon />} top="Work on" bottom="Assembly" disabled />
          </GroupBody>
        </Group>
      </Ribbon>

      <SelectionBar>
        <MenuButton>
          <span><u>M</u>enu</span>
          <Caret />
        </MenuButton>
        <Divider $l={5} $r={12} />
        <Selects>
          <SelectBox $w={117}>
            <select aria-label="Type filter" defaultValue="none">
              <option value="none">No Selection Filter</option>
            </select>
            <Caret size={7} />
          </SelectBox>
          <SelectBox $w={122}>
            <select aria-label="Selection scope" defaultValue="all">
              <option value="all">Entire Assembly</option>
            </select>
            <Caret size={7} />
          </SelectBox>
        </Selects>
        <Tools>
          <Tool aria-label="Find in navigator"><HierarchyIcon /></Tool>
          <Tool aria-label="Reset filters"><UndoFilterIcon /></Tool>
          <Tool $w={22} aria-label="Filter"><FilterIcon /></Tool>
          <Tool $w={10} aria-label="Filter options"><Caret /></Tool>
          <Tool aria-label="Select previous"><UndoTargetIcon /></Tool>
          <Tool aria-label="Up one level"><TreeUpIcon /></Tool>
          <Tool aria-label="Select all"><CubeTargetIcon /></Tool>
          <Tool aria-label="Rectangle select"><MarqueeIcon /></Tool>
          <Tool $w={10} aria-label="Select options"><Caret /></Tool>
          <Tool aria-label="Face select"><BodyIcon /></Tool>
          <Tool aria-label="Body select"><SolidIcon /></Tool>
        </Tools>
        <Tools>
          {snapTools.map(([icon, name, on]) => (
            <Tool key={name} $on={on} aria-label={name} aria-pressed={on}>{icon}</Tool>
          ))}
        </Tools>
        <Divider $l={5} $r={5} />
        <Tools>
          {viewTools.map(([icon, name]) => (
            <Tool key={name} aria-label={name}>{icon}</Tool>
          ))}
        </Tools>
      </SelectionBar>

      <Work>
        <Navigator>
          <NavigatorHead>
            <h1>Part Navigator</h1>
            <MaximizeButton aria-label="Maximize" />
          </NavigatorHead>
          <TreeFrame>
            <Tree>
              <thead>
                <tr>
                  <th>
                    <HeadCell>
                      Name
                      <svg width="9" height="5" viewBox="0 0 9 5"><path d="M0 5H9L4.5 0Z" fill="#111" /></svg>
                    </HeadCell>
                  </th>
                  <th>Up to Date</th>
                </tr>
              </thead>
              <tbody>
                <tr>
                  <td><Node><Twisty first /><ModelViewsIcon /><NodeLabel $focus>Model Views</NodeLabel></Node></td>
                  <td><FocusCell /></td>
                </tr>
                <tr>
                  <td><Node><Twisty /><IconSlot><GreenCheck /></IconSlot><CameraIcon /><NodeLabel>Cameras</NodeLabel></Node></td>
                  <td />
                </tr>
                <tr>
                  <td><Node><Twisty /><FolderIcon marked /><NodeLabel>User Expressions</NodeLabel></Node></td>
                  <td />
                </tr>
                <tr>
                  <td><Node><Twisty /><FolderIcon /><NodeLabel>Non-timestamp Geometry</NodeLabel></Node></td>
                  <td />
                </tr>
                <tr>
                  <td><Node><Twisty open last /><FolderIcon /><NodeLabel>Model History</NodeLabel></Node></td>
                  <td />
                </tr>
                {history.map((h, i) => (
                  <tr key={h.label}>
                    <td>
                      <Node $child $dim={h.dim} $bold={h.bold}>
                        <Branch last={i === history.length - 1} />
                        <CheckWrap>
                          <NodeCheck type="checkbox" defaultChecked aria-label={h.label} />
                          <GreenCheck s={11} />
                        </CheckWrap>
                        {h.icon}
                        <NodeLabel>{h.label}</NodeLabel>
                      </Node>
                    </td>
                    <td><StatusCell><GreenCheck /></StatusCell></td>
                  </tr>
                ))}
                {emptyRows.map((i) => (
                  <tr key={i}><td /><td /></tr>
                ))}
              </tbody>
            </Tree>
          </TreeFrame>
        </Navigator>

        <Graphics>
          <DocTabs>
            <DocTab>
              <PartIcon />
              <span>TJP_parameter.prt</span>
              <svg width="11" height="12" viewBox="0 0 11 12" fill="none">
                <path d="M7 1H1.5V11H8.5V8M6 6L9.5 4L8 1.5" stroke="#fff" strokeWidth="1.5" />
              </svg>
              <CloseButton aria-label="Close part">
                <svg width="9" height="9" viewBox="0 0 9 9"><path d="M1 1L8 8M8 1L1 8" stroke="#fff" strokeWidth="2" /></svg>
              </CloseButton>
            </DocTab>
          </DocTabs>
          <Canvas>
            <Scene>
              <path
                d={`M213.5 28.5H673.5V718.5H213.5Z${hole(443.5, 143.5)}${hole(443.5, 373.5)}${hole(443.5, 603.5)}`}
                fill="#a3b6bc"
                fillRule="evenodd"
                stroke="#2c3336"
              />
              <g fill="none">
                <path d="M255.5 373.5V415.5H213.5M255 373.5H284M213.5 415V446" stroke="#cfcfcf" />
                <path d="M213 373.5H255.5M213.5 373V415" stroke="#a8595a" />
                <path d="M206 373.5H220M209.5 368.5L217.5 378.5M217.500 368.5L209.5 378.5M213.5 366V381" stroke="#9c4a4c" />
              </g>
              <circle cx="213.5" cy="373.5" r="3" fill="#6a3a3c" />
              <path d="M280 370L296 373.5L280 377Z" fill="#f0f0f0" />
              <path d="M280 375L296 373.5L284 377H280Z" fill="#7c8688" />
              <path d="M210 441H217L214 456Z" fill="#d6d6d6" />
              <path d="M210 441H213L213.5 456Z" fill="#9c4a4c" />
              <text x="298" y="379" fontSize="14" fill="#cfd1d2">X</text>
              <text x="209" y="468" fontSize="14" fill="#c4b4b5">Z</text>
            </Scene>
            <Triad width="80" height="40" viewBox="0 0 80 40">
              <path d="M10 14.5H36.5V40H10Z" fill="#d2d3d4" stroke="#bfc0c1" />
              <path d="M9.5 14V40" stroke="#1747e0" strokeWidth="2" />
              <path d="M12 14H40" stroke="#d8262c" strokeWidth="2" />
              <path d="M37 11L56 14.5L37 18Z" fill="#d8262c" />
              <circle cx="9" cy="15" r="4" fill="#2c6a34" />
              <path d="M5 10L9 14L13 10M6 18L12 12" stroke="#2eb040" strokeWidth="1.5" fill="none" />
              <text x="55" y="20" fontSize="14" fill="#d8434a">X</text>
            </Triad>
          </Canvas>
        </Graphics>
      </Work>
    </Window>
  );
}
